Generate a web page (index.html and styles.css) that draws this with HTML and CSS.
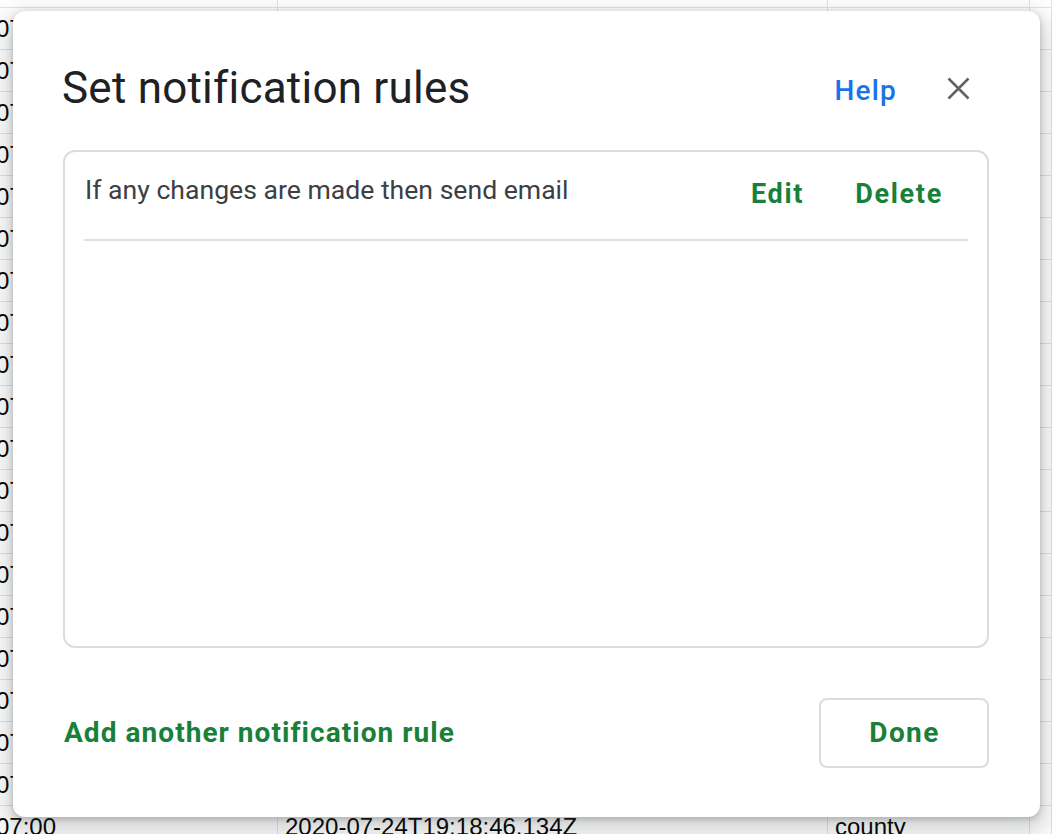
FILE: index.html
```html
<!DOCTYPE html>
<html lang="en">
<head>
<meta charset="utf-8">
<title>Set notification rules</title>
<link rel="stylesheet" href="styles.css">
</head>
<body>
<div class="sheet">
  <div class="row"><div class="cell cell-first">07:00</div><div class="cell">2020-07-24T19:18:46.134Z</div><div class="cell">county</div><div class="cell"></div></div>
  <div class="row"><div class="cell cell-first">07:00</div><div class="cell">2020-07-24T19:18:46.134Z</div><div class="cell">county</div><div class="cell"></div></div>
  <div class="row"><div class="cell cell-first">07:00</div><div class="cell">2020-07-24T19:18:46.134Z</div><div class="cell">county</div><div class="cell"></div></div>
  <div class="row"><div class="cell cell-first">07:00</div><div class="cell">2020-07-24T19:18:46.134Z</div><div class="cell">county</div><div class="cell"></div></div>
  <div class="row"><div class="cell cell-first">07:00</div><div class="cell">2020-07-24T19:18:46.134Z</div><div class="cell">county</div><div class="cell"></div></div>
  <div class="row"><div class="cell cell-first">07:00</div><div class="cell">2020-07-24T19:18:46.134Z</div><div class="cell">county</div><div class="cell"></div></div>
  <div class="row"><div class="cell cell-first">07:00</div><div class="cell">2020-07-24T19:18:46.134Z</div><div class="cell">county</div><div class="cell"></div></div>
  <div class="row"><div class="cell cell-first">07:00</div><div class="cell">2020-07-24T19:18:46.134Z</div><div class="cell">county</div><div class="cell"></div></div>
  <div class="row"><div class="cell cell-first">07:00</div><div class="cell">2020-07-24T19:18:46.134Z</div><div class="cell">county</div><div class="cell"></div></div>
  <div class="row"><div class="cell cell-first">07:00</div><div class="cell">2020-07-24T19:18:46.134Z</div><div class="cell">county</div><div class="cell"></div></div>
  <div class="row"><div class="cell cell-first">07:00</div><div class="cell">2020-07-24T19:18:46.134Z</div><div class="cell">county</div><div class="cell"></div></div>
  <div class="row"><div class="cell cell-first">07:00</div><div class="cell">2020-07-24T19:18:46.134Z</div><div class="cell">county</div><div class="cell"></div></div>
  <div class="row"><div class="cell cell-first">07:00</div><div class="cell">2020-07-24T19:18:46.134Z</div><div class="cell">county</div><div class="cell"></div></div>
  <div class="row"><div class="cell cell-first">07:00</div><div class="cell">2020-07-24T19:18:46.134Z</div><div class="cell">county</div><div class="cell"></div></div>
  <div class="row"><div class="cell cell-first">07:00</div><div class="cell">2020-07-24T19:18:46.134Z</div><div class="cell">county</div><div class="cell"></div></div>
  <div class="row"><div class="cell cell-first">07:00</div><div class="cell">2020-07-24T19:18:46.134Z</div><div class="cell">county</div><div class="cell"></div></div>
  <div class="row"><div class="cell cell-first">07:00</div><div class="cell">2020-07-24T19:18:46.134Z</div><div class="cell">county</div><div class="cell"></div></div>
  <div class="row"><div class="cell cell-first">07:00</div><div class="cell">2020-07-24T19:18:46.134Z</div><div class="cell">county</div><div class="cell"></div></div>
  <div class="row"><div class="cell cell-first">07:00</div><div class="cell">2020-07-24T19:18:46.134Z</div><div class="cell">county</div><div class="cell"></div></div>
  <div class="row"><div class="cell cell-first">07:00</div><div class="cell">2020-07-24T19:18:46.134Z</div><div class="cell">county</div><div class="cell"></div></div>
  <div class="row"><div class="cell cell-first">07:00</div><div class="cell">2020-07-24T19:18:46.134Z</div><div class="cell">county</div><div class="cell"></div></div>
</div>

<div class="dialog" role="dialog" aria-labelledby="dlg-title">
  <div class="dialog-header">
    <h1 class="dialog-title" id="dlg-title">Set notification rules</h1>
    <a class="help-link" href="#">Help</a>
    <button class="close-btn" aria-label="Close">
      <svg class="close-icon" width="23" height="23" viewBox="0 0 23 23" aria-hidden="true">
        <path d="M1.5 1.5L21.5 21.5M21.5 1.5L1.5 21.5" stroke="#5f6368" stroke-width="2.5" fill="none"/>
      </svg>
    </button>
  </div>

  <div class="rule-card">
    <div class="rule-row">
      <span class="rule-text">If any changes are made then send email</span>
      <div class="rule-actions">
        <button class="text-btn">Edit</button>
        <button class="text-btn">Delete</button>
      </div>
    </div>
    <div class="rule-divider"></div>
  </div>

  <div class="dialog-footer">
    <button class="add-link">Add another notification rule</button>
    <button class="done-btn">Done</button>
  </div>
</div>
</body>
</html>
```

FILE: styles.css
```css
html, body {
  margin: 0;
  padding: 0;
}

body {
  width: 1052px;
  height: 834px;
  overflow: hidden;
  position: relative;
  background: #ffffff;
  font-family: Roboto, "Liberation Sans", Arial, sans-serif;
}

/* ---------- spreadsheet backdrop ---------- */
.sheet {
  margin-top: -34px;
  font-family: "Liberation Sans", Arial, sans-serif;
  font-size: 24px;
  color: #000000;
}

.row {
  display: grid;
  grid-template-columns: 278px 550px 202px 1fr;
  height: 42px;
  box-sizing: border-box;
  border-bottom: 1px solid #e2e2e2;
}

.cell {
  border-right: 1px solid #e2e2e2;
  line-height: 41px;
  padding-left: 7px;
  white-space: nowrap;
  overflow: hidden;
}

.cell-first {
  padding-left: 0;
  text-indent: -4px;
}

/* ---------- dialog ---------- */
.dialog {
  position: absolute;
  left: 13px;
  top: 11px;
  width: 1027px;
  height: 806px;
  box-sizing: border-box;
  padding: 51px 51px 49px 48px;
  background: #ffffff;
  border-radius: 12px;
  box-shadow: 0 10px 22px 8px rgba(60, 64, 67, 0.2), 0 2px 6px rgba(60, 64, 67, 0.3);
  display: flex;
  flex-direction: column;
}

.dialog-header {
  display: flex;
  align-items: center;
  height: 52px;
}

.dialog-title {
  flex: 1;
  margin: 0 0 0 1px;
  font-size: 44px;
  font-weight: 400;
  letter-spacing: 0.22px;
  line-height: 52px;
  color: #202124;
}

.help-link {
  font-size: 28px;
  font-weight: 500;
  letter-spacing: 1.2px;
  line-height: 32px;
  padding-top: 6px;
  color: #1a73e8;
  text-decoration: none;
  margin-right: 50px;
}

.close-btn {
  border: none;
  background: none;
  padding: 0;
  margin: 0 19px 0 0;
  width: 23px;
  height: 23px;
  display: flex;
  cursor: pointer;
}

.close-icon {
  display: block;
}

/* ---------- rule card ---------- */
.rule-card {
  flex: 1;
  margin: 36px 0 0 2px;
  border: 2px solid #dadce0;
  border-radius: 12px;
  padding: 0 19px;
}

.rule-row {
  display: flex;
  align-items: flex-start;
  justify-content: space-between;
  padding: 22px 0 29px 1px;
}

.rule-text {
  font-size: 26.6px;
  line-height: 32px;
  color: #3c4043;
}

.rule-actions {
  display: flex;
  margin-top: 4px;
}

.text-btn {
  border: none;
  background: none;
  margin: 0;
  padding: 0 25px 0 26px;
  font-family: inherit;
  font-size: 27px;
  font-weight: 700;
  letter-spacing: 1.7px;
  line-height: 32px;
  color: #188038;
  cursor: pointer;
}

.rule-divider {
  height: 2px;
  background: #e0e0e3;
}

/* ---------- footer ---------- */
.dialog-footer {
  margin-top: 50px;
  display: flex;
  align-items: center;
  justify-content: space-between;
}

.add-link {
  border: none;
  background: none;
  margin: 0 0 0 3px;
  padding: 0;
  font-family: inherit;
  font-size: 28px;
  font-weight: 700;
  letter-spacing: 1.05px;
  line-height: 32px;
  color: #188038;
  cursor: pointer;
}

.done-btn {
  width: 170px;
  height: 70px;
  box-sizing: border-box;
  border: 2px solid #dadce0;
  border-radius: 8px;
  background: #ffffff;
  margin: 0;
  padding: 0 0 2px 1px;
  font-family: inherit;
  font-size: 28px;
  font-weight: 700;
  letter-spacing: 1.4px;
  color: #188038;
  cursor: pointer;
}
```
